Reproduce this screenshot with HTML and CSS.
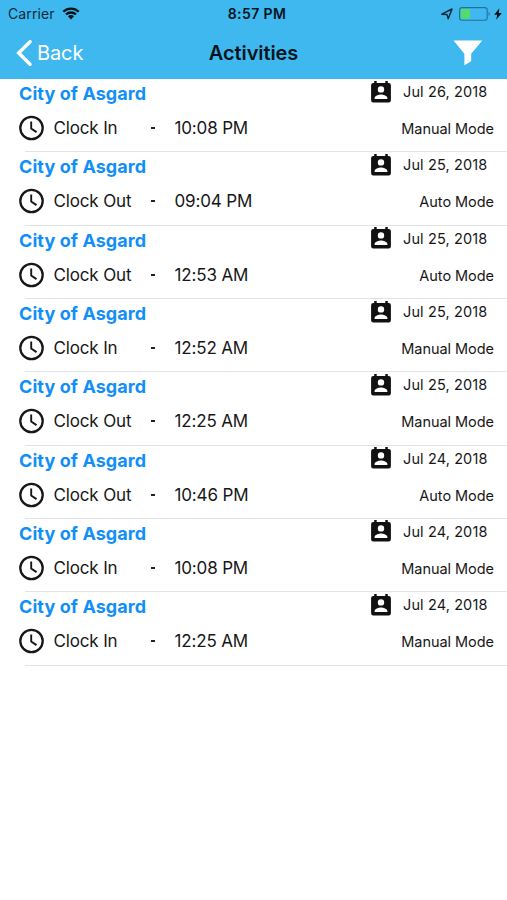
FILE: index.html
```html
<!DOCTYPE html>
<html lang="en">
<head>
<meta charset="utf-8">
<title>Activities</title>
<link rel="stylesheet" href="styles.css">
</head>
<body>
<header class="header">
  <div class="status">
    <div class="status-left"><span class="carrier">Carrier</span>
      <svg class="wifi" viewBox="0 0 18 13"><path d="M1.3 4.7a11 11 0 0 1 15.4 0M4 7.5a7.2 7.2 0 0 1 10 0" fill="none" stroke="#06141c" stroke-width="2.3"/><path d="M9 12.4 5.9 9.3a4.4 4.4 0 0 1 6.2 0z" fill="#06141c"/></svg>
    </div>
    <span class="time">8:57 PM</span>
    <div class="status-right">
      <svg class="location" viewBox="0 0 12 12"><path d="M.8 6.2 11 1 7.2 10.8 6 6.6z" fill="none" stroke="#0b2a3a" stroke-width="1.5" stroke-linejoin="round"/></svg>
      <svg class="battery" viewBox="0 0 32 14"><rect x=".6" y=".6" width="27.6" height="12.6" rx="2.4" fill="none" stroke="#286f92" stroke-width="1.1"/><rect x="2" y="2" width="9" height="9.8" rx="1" fill="#55dc66"/><path d="M29.6 4.8q2.4 2.1 0 4.3z" fill="#286f92"/></svg>
      <svg class="bolt" viewBox="0 0 8 12"><path d="M5.4.2.2 6.8h3L2.2 11.8 7.8 4.9H4.7z" fill="#04131c"/></svg>
    </div>
  </div>
  <nav class="nav">
    <div class="back"><svg class="chevron" viewBox="0 0 16 26"><path d="M14 1.8 2.7 13 14 24.2" fill="none" stroke="#fff" stroke-width="3.4" stroke-linecap="round" stroke-linejoin="miter"/></svg><span>Back</span></div>
    <h1 class="title">Activities</h1>
    <svg class="filter" viewBox="0 0 30 26"><path d="M.5.6h28.8L18.2 13.8v7.4l-6.8 4V13.8z" fill="#fff"/></svg>
  </nav>
</header>
<main class="list" id="list"></main>
<template id="row">
  <article class="row">
    <div class="line top">
      <h2 class="place">City of Asgard</h2>
      <svg class="contact" viewBox="0 0 20 22"><path fill-rule="evenodd" d="M3.2 0h2.5v2.1h8.6V0h2.5v2.1h.9A2.2 2.2 0 0 1 19.9 4.3v14.9a2.2 2.2 0 0 1-2.2 2.2H2.3A2.2 2.2 0 0 1 .1 19.2V4.3a2.2 2.2 0 0 1 2.2-2.2h.9zM10 5.2a3.2 3.2 0 1 0 0 6.4 3.2 3.2 0 0 0 0-6.4M3.6 18.1h12.8v-1.2c0-2.3-4.2-3.5-6.4-3.5s-6.4 1.2-6.4 3.5z"/></svg>
      <span class="date"></span>
    </div>
    <div class="line bottom">
      <svg class="clock" viewBox="0 0 26 26"><circle cx="12.5" cy="13" r="11.2" fill="none" stroke="#171717" stroke-width="2.3"/><path d="M12.2 6.6v6.9l5.3 3.6" fill="none" stroke="#171717" stroke-width="1.9"/></svg>
      <span class="action"></span>
      <span class="dash"></span>
      <span class="hour"></span>
      <span class="mode"></span>
    </div>
  </article>
</template>
<script src="app.js"></script>
</body>
</html>
```
FILE: styles.css
```css
* { box-sizing: border-box; }
body {
  margin: 0;
  height: 900px;
  background: #fff;
  color: #171717;
  font-family: Inter, "Liberation Sans", sans-serif;
  overflow: hidden;
}
svg { display: block; flex: none; }
h1, h2 { margin: 0; }
span, h1, h2 { white-space: nowrap; }
.header { height: 79.2px; background: #3fb8f0; }
.status {
  display: grid;
  grid-template-columns: 1fr auto 1fr;
  height: 27px;
  padding: 0 5px 0 12px;
  align-items: center;
  color: #06141c;
}
.status-left, .status-right { display: flex; align-items: center; }
.status-left { margin-left: -4px; }
.status-right { justify-content: flex-end; }
.carrier { font-size: 14px; line-height: 27px; letter-spacing: .1px; color: #0c2b3a; }
.wifi { width: 18px; height: 13px; margin-left: 7px; }
.time { font-size: 14px; font-weight: 600; line-height: 27px; letter-spacing: .4px; }
.location { width: 12px; height: 12px; }
.battery { width: 32px; height: 14px; margin-left: 6px; }
.bolt { width: 8px; height: 12px; margin-left: 3px; }
.nav {
  display: grid;
  grid-template-columns: 1fr auto 1fr;
  height: 51px;
  align-items: center;
  padding: 0 16px;
}
.back { display: flex; align-items: center; color: #fff; font-size: 20px; letter-spacing: -.1px; }
.chevron { width: 16px; height: 26px; margin-right: 5px; }
.title { font-size: 20px; font-weight: 600; line-height: 26px; letter-spacing: -.1px; color: #06141c; }
.filter { width: 30px; height: 26px; justify-self: end; margin-right: 8px; }
.row { height: 73.3px; position: relative; }
.row::after {
  content: "";
  position: absolute;
  left: 25px;
  right: 0;
  bottom: 0;
  height: 1px;
  background: #e3e3e5;
}
.line { display: flex; align-items: center; padding-left: 19px; }
.top { height: 29px; }
.place { flex: 0 0 352px; padding-top: 1px; font-size: 18px; line-height: 28px; font-weight: 700; letter-spacing: .08px; color: #128ff7; }
.contact { width: 20px; height: 22px; margin-top: -4px; fill: #111; }
.date { margin: -4px 0 0 12px; font-size: 14.5px; letter-spacing: .12px; }
.bottom { height: 40px; padding-right: 13px; }
.clock { width: 26px; height: 26px; }
.action { width: 97px; margin-left: 8.5px; font-size: 17px; letter-spacing: -.15px; }
.dash { width: 4px; height: 2px; background: #222; }
.hour { margin-left: 20px; font-size: 17px; letter-spacing: -.15px; }
.mode { margin: 1px 0 0 auto; font-size: 14.5px; letter-spacing: -.05px; }
```
FILE: app.js
```js
const activities = [
  ["Jul 26, 2018", "Clock In", "10:08 PM", "Manual Mode"],
  ["Jul 25, 2018", "Clock Out", "09:04 PM", "Auto Mode"],
  ["Jul 25, 2018", "Clock Out", "12:53 AM", "Auto Mode"],
  ["Jul 25, 2018", "Clock In", "12:52 AM", "Manual Mode"],
  ["Jul 25, 2018", "Clock Out", "12:25 AM", "Manual Mode"],
  ["Jul 24, 2018", "Clock Out", "10:46 PM", "Auto Mode"],
  ["Jul 24, 2018", "Clock In", "10:08 PM", "Manual Mode"],
  ["Jul 24, 2018", "Clock In", "12:25 AM", "Manual Mode"]
];
const list = document.getElementById("list");
const template = document.getElementById("row");
for (const [date, action, hour, mode] of activities) {
  const row = template.content.cloneNode(true);
  row.querySelector(".date").textContent = date;
  row.querySelector(".action").textContent = action;
  row.querySelector(".hour").textContent = hour;
  row.querySelector(".mode").textContent = mode;
  list.append(row);
}
```
